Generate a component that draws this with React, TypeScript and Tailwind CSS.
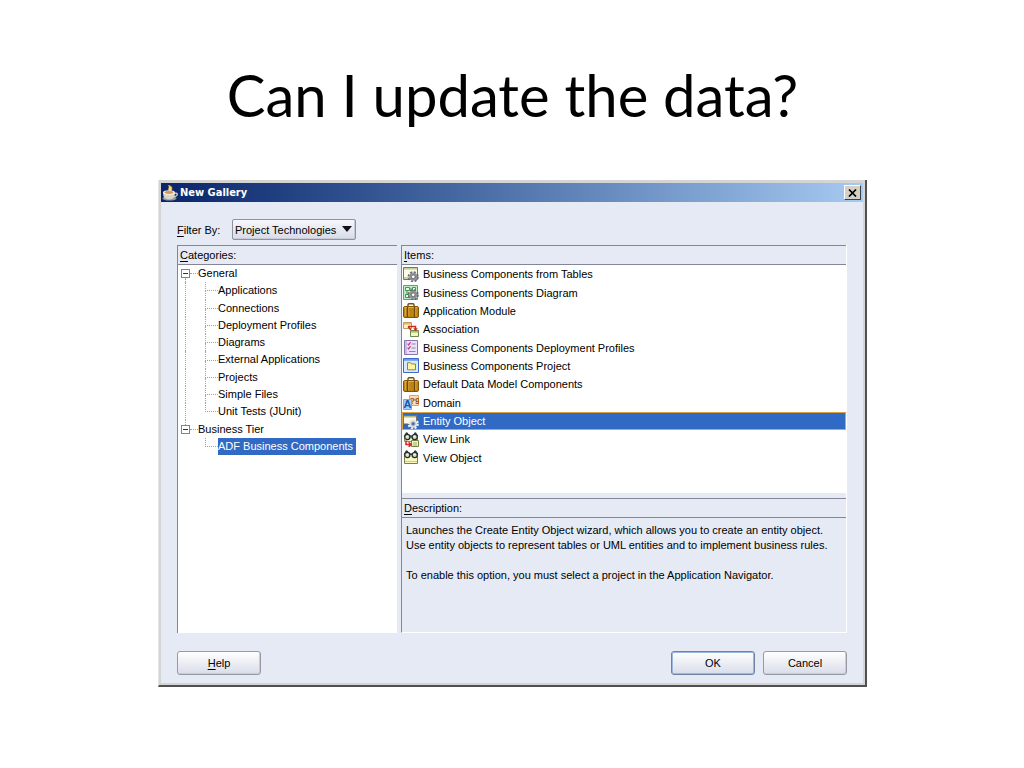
import React from "react";

type IconName =
  | "gear"
  | "diagram"
  | "briefcase"
  | "association"
  | "profile"
  | "project"
  | "domain"
  | "entity"
  | "viewLink"
  | "viewObject";

interface TreeRow {
  label: string;
  level: 0 | 1;
  trunk?: boolean; // the root line runs on past this row
  last?: boolean;
  selected?: boolean;
}

const treeRows: TreeRow[] = [
  { label: "General", level: 0, trunk: true },
  { label: "Applications", level: 1, trunk: true },
  { label: "Connections", level: 1, trunk: true },
  { label: "Deployment Profiles", level: 1, trunk: true },
  { label: "Diagrams", level: 1, trunk: true },
  { label: "External Applications", level: 1, trunk: true },
  { label: "Projects", level: 1, trunk: true },
  { label: "Simple Files", level: 1, trunk: true },
  { label: "Unit Tests (JUnit)", level: 1, trunk: true, last: true },
  { label: "Business Tier", level: 0 },
  { label: "ADF Business Components", level: 1, last: true, selected: true },
];

const galleryItems: { label: string; icon: IconName; selected?: boolean }[] = [
  { label: "Business Components from Tables", icon: "gear" },
  { label: "Business Components Diagram", icon: "diagram" },
  { label: "Application Module", icon: "briefcase" },
  { label: "Association", icon: "association" },
  { label: "Business Components Deployment Profiles", icon: "profile" },
  { label: "Business Components Project", icon: "project" },
  { label: "Default Data Model Components", icon: "briefcase" },
  { label: "Domain", icon: "domain" },
  { label: "Entity Object", icon: "entity", selected: true },
  { label: "View Link", icon: "viewLink" },
  { label: "View Object", icon: "viewObject" },
];

const Gear = ({ light = false }: { light?: boolean }) => (
  <g>
    <circle
      cx="10.2"
      cy="9.8"
      r="4.7"
      fill="none"
      stroke={light ? "#f4f4f4" : "#666b6e"}
      strokeWidth="1.8"
      strokeDasharray="2.1 1.59"
    />
    <circle cx="10.2" cy="9.8" r="4" fill={light ? "#dfe3e8" : "#8d9295"} />
    <circle
      cx="10.2"
      cy="9.8"
      r="1.8"
      fill={light ? "#5d7196" : "#ffffff"}
      stroke={light ? "#8a93a4" : "#5d6266"}
      strokeWidth="0.7"
    />
  </g>
);

const Glasses = () => (
  <g stroke="#26302a" strokeWidth="1.3">
    <path d="M1.2 4.5 3.4 1 5 1.6M14.8 4.5 12.6 1 11 1.6M6.8 4.4q1.2-1 2.4 0" fill="none" />
    <circle cx="4.3" cy="5" r="2.6" fill="#cfdcc9" />
    <circle cx="11.7" cy="5" r="2.6" fill="#cfdcc9" />
    <path d="M3.2 4.6h1.5M10.8 4.6h1.5" stroke="#ffffff" strokeWidth="1" />
  </g>
);

const ItemIcon = ({ name }: { name: IconName }) => {
  const drawings: Record<IconName, React.ReactNode> = {
    gear: (
      <>
        <path d="M.5.5h14v12H.5z" fill="#fbfbe6" stroke="#6f7a66" />
        <path d="M1 1h13v1.6H1z" fill="#c3cda2" />
        <path d="M1 10h5v2H1z" fill="#c9d489" />
        <Gear />
      </>
    ),
    diagram: (
      <>
        <path d="M.5.5h14v14H.5z" fill="#bdeac2" stroke="#5aa869" />
        <path
          d="M2.5 2.5h4v3h-4zM9.5 2.5h3v3h-3zM2.5 9.5h3v3h-3z"
          fill="#eefcee"
          stroke="#3f9b4e"
        />
        <path d="M6.5 4h3M4 5.5v4" stroke="#3f9b4e" />
        <Gear />
      </>
    ),
    briefcase: (
      <>
        <path d="M5 3.5V2Q5 .8 6 .8h4q1 0 1 1.2v1.5" fill="none" stroke="#75500c" strokeWidth="1.4" />
        <rect x=".5" y="3.5" width="15" height="11" rx="1.4" fill="#bd8416" stroke="#7d560d" />
        <path d="M1.5 4.5h13" stroke="#e0b04c" />
        <path d="M4.5 4v10M11.5 4v10" stroke="#704705" strokeWidth="1.2" />
        <path d="M5.8 5v8M12.8 5v8M2.5 5v8" stroke="#d9a638" />
      </>
    ),
    association: (
      <>
        <path d="M.5.5h8v6h-8z" fill="#fdf6cc" stroke="#b9a05a" />
        <path d="M1 1h7v1.6H1z" fill="#eeb45e" />
        <path d="M7.5 8.5h8v6h-8z" fill="#f4f7c0" stroke="#6f8a4c" />
        <path d="M8 9h7v1.6H8z" fill="#9cc566" />
        <path d="M5 4.5h7.5V9M5 4.5l3 3.5" fill="none" stroke="#cf2a20" strokeWidth="1.5" />
        <path d="m10.2 6.2 2.3 2.9 2.3-2.9z" fill="#cf2a20" />
      </>
    ),
    profile: (
      <>
        <path d="M1.5.5h13v14h-13z" fill="#e9e2fa" stroke="#8476ae" />
        <path d="M3 1v13" stroke="#a893d2" />
        <path d="M8.5 4h4M8.5 8h4M6 11.5h6.5" stroke="#8a86a8" />
        <path d="m4.6 3.6 1.1 1.3L7.6 2M4.6 7.6l1.1 1.3L7.6 6" fill="none" stroke="#c9418c" strokeWidth="1.2" />
      </>
    ),
    project: (
      <>
        <path d="M.5.5h15v14H.5z" fill="#d8e8ff" stroke="#3b6cc4" />
        <path d="M1 1h14v1.8H1z" fill="#6a9cec" />
        <path d="M4.5 6V4.7h3l1 1.3h4v5.8h-8z" fill="#fff7a0" stroke="#8d8640" />
      </>
    ),
    domain: (
      <>
        <path d="M6.5.5h9v10h-9z" fill="#fbdcb4" stroke="#dfa567" />
        <text x="6.6" y="9" fontSize="9" fontWeight="700" fill="#9c5420" fontFamily="Liberation Sans, sans-serif">
          ?9
        </text>
        <path d="M.5 4.5h8v10h-8z" fill="#a5cbfb" stroke="#79a9e4" />
        <text x=".6" y="13.2" fontSize="11" fontWeight="700" fill="#1557a8" fontFamily="Liberation Sans, sans-serif">
          A
        </text>
      </>
    ),
    entity: (
      <>
        <path d="M.5 1.5h13v9H.5z" fill="#fbfbec" stroke="#6f7668" />
        <path d="M1 2h12v1.5H1z" fill="#b8b583" />
        <path d="M.5 9.5h5v3h-5z" fill="#49638f" />
        <Gear light />
      </>
    ),
    viewLink: (
      <>
        <path d="M1.5 5.5h13v4h-13z" fill="#f7f3c8" stroke="#8b9164" />
        <path d="M8.5 8.5h7v6h-7z" fill="#f4f6bd" stroke="#718447" />
        <Glasses />
        <path d="M3 8.5v4h5M5.6 10.2l2.6 2.3-2.6 2.3" fill="none" stroke="#d22b20" strokeWidth="1.5" />
        <path d="M10 11h4M10 13h4" stroke="#a3ad68" />
      </>
    ),
    viewObject: (
      <>
        <path d="M1.5 4.5h13v9h-13z" fill="#f8f7bd" stroke="#758052" />
        <path d="M2 11.5h12" stroke="#c9cc8c" />
        <Glasses />
      </>
    ),
  };

  return (
    <svg viewBox="0 0 16 15" className="h-[15px] w-4 shrink-0" aria-hidden="true">
      {drawings[name]}
    </svg>
  );
};

const CupIcon = () => (
  <svg viewBox="0 0 16 16" className="h-4 w-4 shrink-0" aria-hidden="true">
    <path d="M8 6C4 4 9 3 6 0c4 1 5 3 3 6z" fill="#ffdf65" stroke="#e5902c" strokeWidth=".6" />
    <ellipse cx="7.5" cy="13.4" rx="7" ry="2.2" fill="#9b9890" />
    <path d="M12 8.5q4-1 3 1.7-1 1.8-4 1.2" fill="none" stroke="#d9d5cb" strokeWidth="1.3" />
    <path d="M1 7.5h12q0 7-6 7t-6-7z" fill="#d8d5cd" />
    <ellipse cx="7" cy="7.5" rx="6" ry="2.3" fill="#f8f5ee" />
    <ellipse cx="7" cy="7.5" rx="4.5" ry="1.4" fill="#d59a4a" />
  </svg>
);

const PanelHeader = ({ id, hotkey, rest }: { id: string; hotkey: string; rest: string }) => (
  <h2
    id={id}
    className="flex h-5 shrink-0 items-center border-y border-[#85859a] bg-[#e6eaf5] pl-[2px] pt-px"
  >
    <span>
      <u className="underline-offset-2">{hotkey}</u>
      {rest}
    </span>
  </h2>
);

const CategoryRow = ({ row }: { row: TreeRow }) => {
  if (row.level === 0) {
    return (
      <li className="flex min-h-0 items-center pl-[3px]">
        <div className="flex h-full w-[9px] flex-col items-center">
          <span className={`flex-1 border-l border-dotted ${row.trunk ? "border-transparent" : "border-[#a0a0a0]"}`} />
          <button
            type="button"
            aria-label={`Collapse ${row.label}`}
            className="flex h-[9px] w-[9px] items-center justify-center border border-[#848484] bg-white"
          >
            <span className="h-px w-[5px] bg-[#303030]" />
          </button>
          <span className={`flex-1 border-l border-dotted ${row.trunk ? "border-[#a0a0a0]" : "border-transparent"}`} />
        </div>
        <span className="w-2 border-t border-dotted border-[#a0a0a0]" />
        <button type="button">{row.label}</button>
      </li>
    );
  }

  return (
    <li className="flex min-h-0 items-center pl-[7px]">
      <span className={`h-full w-5 border-l border-dotted ${row.trunk ? "border-[#a0a0a0]" : "border-transparent"}`} />
      <span className="flex h-full w-[13px] flex-col">
        <span className="flex-1 border-b border-l border-dotted border-[#a0a0a0]" />
        <span className={`flex-1 border-l border-dotted ${row.last ? "border-transparent" : "border-[#a0a0a0]"}`} />
      </span>
      <button
        type="button"
        className={`h-full whitespace-nowrap ${row.selected ? "bg-[#316ac5] pr-[3px] text-white" : ""}`}
      >
        {row.label}
      </button>
    </li>
  );
};

const DialogButton = ({ children, primary = false }: { children: React.ReactNode; primary?: boolean }) => (
  <button
    type="button"
    className={`h-6 w-[84px] rounded-[3px] border bg-linear-to-b from-white to-[#d9dde9] pt-px ${
      primary
        ? "border-[#6d83a8] shadow-[inset_0_0_0_1px_#9db8de]"
        : "border-[#9799a6] shadow-[inset_-1px_-1px_0_#c9ccd8]"
    }`}
  >
    {children}
  </button>
);

const NewGalleryDialog = () => (
  <section
    role="dialog"
    aria-labelledby="dialog-title"
    className="border-b-2 border-l border-r-2 border-b-[#505050] border-l-[#e4e4e4] border-r-[#505050] bg-[#e6eaf5] font-['Liberation_Sans',Arial,sans-serif] text-[11px] leading-[15px] text-black"
  >
    <div className="border-2 border-t-[3px] border-[#d4d4d4]">
      <header className="flex h-[19px] items-center bg-linear-to-r from-[#0a246a] to-[#a6caf0] pl-px pr-[2px]">
        <CupIcon />
        <h2
          id="dialog-title"
          className="ml-[2px] flex-1 font-['DejaVu_Sans_Condensed','DejaVu_Sans',sans-serif] text-[11px] font-bold text-white"
        >
          New Gallery
        </h2>
        <button
          type="button"
          aria-label="Close"
          className="flex h-[15px] w-[17px] items-center justify-center border border-b-[#404040] border-l-white border-r-[#404040] border-t-white bg-[#d4d0c8]"
        >
          <svg viewBox="0 0 9 8" className="h-2 w-[9px]" aria-hidden="true">
            <path d="m1 .5 7 7M8 .5l-7 7" stroke="#000000" strokeWidth="1.7" />
          </svg>
        </button>
      </header>

      <div className="px-4 pb-2 pt-[17px]">
        <div className="flex items-center">
          <label htmlFor="filter" className="w-[55px] pt-px">
            <u className="underline-offset-2">F</u>ilter By:
          </label>
          <div className="relative">
            <select
              id="filter"
              className="block h-[21px] w-[124px] appearance-none rounded-[2px] border border-[#8f919d] bg-linear-to-b from-[#f6f7fb] to-[#d9dce8] pl-[2px] pr-4 pt-px shadow-[inset_-1px_-1px_0_#c9ccd8]"
            >
              <option>Project Technologies</option>
            </select>
            <svg
              viewBox="0 0 10 6"
              className="pointer-events-none absolute right-1 top-[7px] h-[6px] w-[10px]"
              aria-hidden="true"
            >
              <path d="M0 0h10L5 6z" fill="#101018" />
            </svg>
          </div>
        </div>

        <div className="mt-[5px] grid grid-cols-[220px_1fr] gap-1">
          {/* Categories */}
          <section aria-labelledby="categories" className="border-l border-[#85859a] bg-white">
            <PanelHeader id="categories" hotkey="C" rest="ategories:" />
            <ul className="grid h-[190px] auto-rows-fr">
              {treeRows.map((row) => (
                <CategoryRow key={row.label} row={row} />
              ))}
            </ul>
          </section>

          <div className="border-b border-l border-r border-b-white border-l-[#85859a] border-r-white">
            {/* Items */}
            <section aria-labelledby="items" className="h-[248px] bg-white">
              <PanelHeader id="items" hotkey="I" rest="tems:" />
              <ul className="grid h-[202px] auto-rows-fr">
                {galleryItems.map((item) => (
                  <li key={item.label} className="min-h-0">
                    <button
                      type="button"
                      className={`flex h-full w-full items-center gap-1 border text-left ${
                        item.selected ? "border-[#d9a441] bg-[#316ac5] text-white" : "border-transparent"
                      }`}
                    >
                      <ItemIcon name={item.icon} />
                      <span className="pt-px">{item.label}</span>
                    </button>
                  </li>
                ))}
              </ul>
            </section>

            {/* Description */}
            <section aria-labelledby="description" className="mt-[5px] h-[134px]">
              <PanelHeader id="description" hotkey="D" rest="escription:" />
              <div className="pl-1 pt-[5px]">
                <p>
                  Launches the Create Entity Object wizard, which allows you to create an entity object.
                  <br />
                  Use entity objects to represent tables or UML entities and to implement business rules.
                </p>
                <p className="mt-[15px]">
                  To enable this option, you must select a project in the Application Navigator.
                </p>
              </div>
            </section>
          </div>
        </div>

        <footer className="mt-[18px] flex gap-2">
          <DialogButton>
            <u className="underline-offset-2">H</u>elp
          </DialogButton>
          <span className="flex-1" />
          <DialogButton primary>OK</DialogButton>
          <DialogButton>Cancel</DialogButton>
        </footer>
      </div>
    </div>
  </section>
);

const App: React.FC = () => {
  return (
    <main className="min-h-screen bg-white pb-20 pl-[158px] pr-[157px] pt-[60px]">
      <h1 className="h-[120px] whitespace-nowrap text-center font-[Lato,sans-serif] text-[58px] leading-[70px] text-black">
        Can I update the data?
      </h1>
      <NewGalleryDialog />
    </main>
  );
};

export default App;
